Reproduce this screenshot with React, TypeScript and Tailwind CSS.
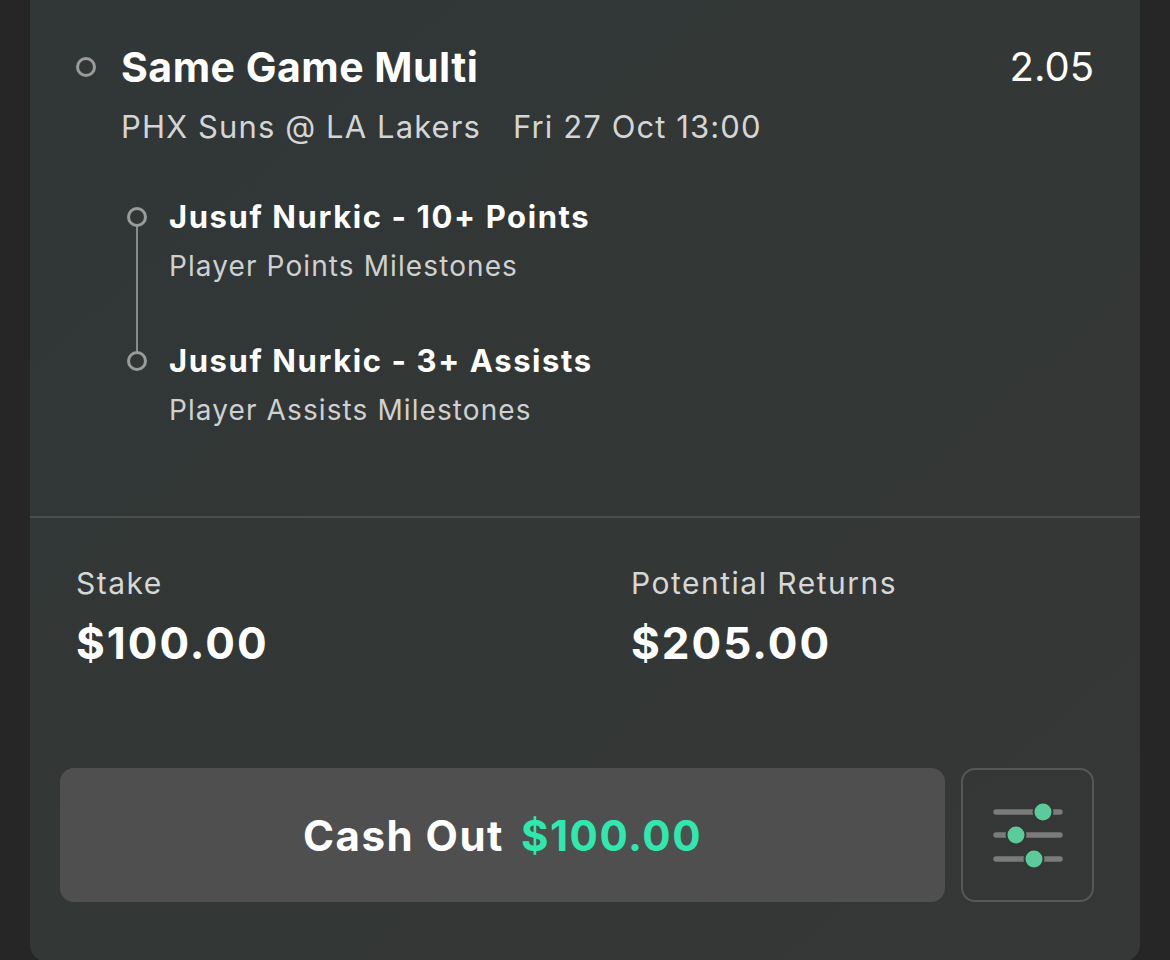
import React from 'react';

const FONT = { fontFamily: 'Inter, "Open Sans", Arial, sans-serif' };

interface Leg {
  title: string;
  market: string;
}

const LEGS: Leg[] = [
  { title: 'Jusuf Nurkic - 10+ Points', market: 'Player Points Milestones' },
  { title: 'Jusuf Nurkic - 3+ Assists', market: 'Player Assists Milestones' },
];

function Ring() {
  return <div className="w-[20px] h-[20px] rounded-full border-[3px] border-[#9a9b9b] bg-[#323736] shrink-0" />;
}

function SlidersIcon() {
  return (
    <svg width="72" height="68" viewBox="0 0 72 68" fill="none">
      <line x1="4" y1="11" x2="68" y2="11" stroke="#7b7b7b" strokeWidth="5.5" strokeLinecap="round" />
      <line x1="4" y1="34" x2="68" y2="34" stroke="#7b7b7b" strokeWidth="5.5" strokeLinecap="round" />
      <line x1="4" y1="58" x2="68" y2="58" stroke="#7b7b7b" strokeWidth="5.5" strokeLinecap="round" />
      <circle cx="51" cy="11" r="9.5" fill="#5ccb9b" stroke="#363636" strokeWidth="2" />
      <circle cx="24" cy="34" r="9.5" fill="#5ccb9b" stroke="#363636" strokeWidth="2" />
      <circle cx="42" cy="58" r="9.5" fill="#5ccb9b" stroke="#363636" strokeWidth="2" />
    </svg>
  );
}

export default function App() {
  return (
    <div className="w-full h-[960px] overflow-hidden bg-[#262626] px-[30px]" style={FONT}>
      <div className="rounded-b-[18px] bg-gradient-to-br from-[#303736] to-[#363737]">
        {/* Header */}
        <div className="pt-[44px] pr-[46px]">
          <div className="flex items-center">
            <div className="w-[91px] pl-[46px] flex items-center">
              <Ring />
            </div>
            <div className="flex-1 text-[41px] leading-[46px] font-bold tracking-[0.5px] text-white">Same Game Multi</div>
            <div className="text-[40px] leading-[46px] text-white">2.05</div>
          </div>
          <div className="mt-[17px] pl-[91px] flex gap-[32px] text-[31px] leading-[40px] tracking-[1.1px] text-[#d4d5d5]">
            <span>PHX Suns @ LA Lakers</span>
            <span>Fri 27 Oct 13:00</span>
          </div>
        </div>

        {/* Legs */}
        <div className="relative mt-[51px] pl-[97px]">
          <div className="absolute left-[106px] top-[19px] w-[2px] h-[144px] bg-[#8a8b8b]" />
          {LEGS.map((leg, i) => (
            <div key={leg.title} className={`flex ${i > 0 ? 'mt-[58px]' : ''}`}>
              <div className="w-[42px] h-[38px] flex items-center relative">
                <Ring />
              </div>
              <div>
                <div className="text-[31px] leading-[38px] font-bold tracking-[1.6px] text-white">{leg.title}</div>
                <div className="mt-[12px] text-[28px] leading-[36px] tracking-[1.1px] text-[#cfd0d0]">{leg.market}</div>
              </div>
            </div>
          ))}
        </div>

        <div className="mt-[88px] h-[2px] bg-[#4a4f4e]" />

        {/* Stake / returns */}
        <div className="grid grid-cols-[555px_1fr] pl-[46px] pt-[47px]">
          <div>
            <div className="text-[30px] leading-[36px] tracking-[1.5px] text-[#d6d7d7]">Stake</div>
            <div className="mt-[18px] text-[44px] leading-[48px] font-bold tracking-[2px] text-white">$100.00</div>
          </div>
          <div>
            <div className="text-[30px] leading-[36px] tracking-[1.5px] text-[#d6d7d7]">Potential Returns</div>
            <div className="mt-[18px] text-[44px] leading-[48px] font-bold tracking-[2px] text-white">$205.00</div>
          </div>
        </div>

        {/* Actions */}
        <div className="flex gap-[16px] pl-[30px] pr-[46px] pt-[101px] pb-[60px]">
          <div className="flex-1 h-[134px] rounded-[14px] bg-[#4f4f4f] flex items-center justify-center gap-[17px] text-[42px] font-bold tracking-[1.5px]">
            <span className="text-white">Cash Out</span>
            <span className="text-[#2fe8ae]">$100.00</span>
          </div>
          <div className="w-[133px] h-[134px] rounded-[14px] border-2 border-[#575757] flex items-center justify-center">
            <SlidersIcon />
          </div>
        </div>
      </div>
    </div>
  );
}
